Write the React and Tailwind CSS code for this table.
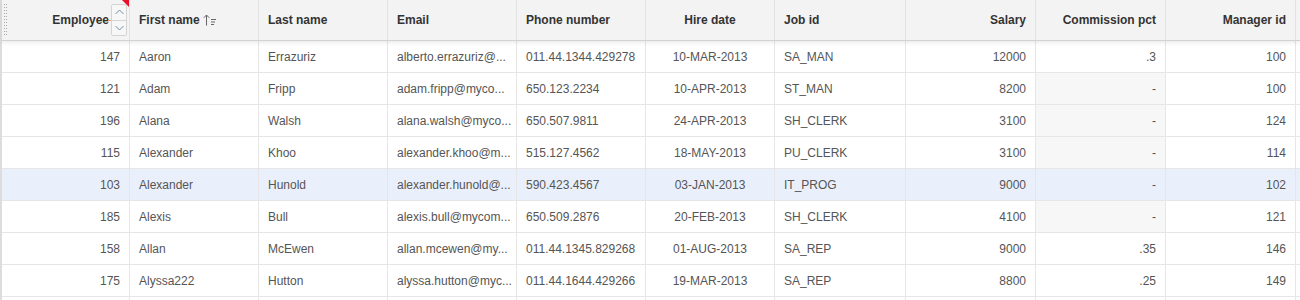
import React from 'react'

const cols = [
  { key: 'id', label: 'Employee', align: 'right' },
  { key: 'first', label: 'First name', align: 'left' },
  { key: 'last', label: 'Last name', align: 'left' },
  { key: 'email', label: 'Email', align: 'left' },
  { key: 'phone', label: 'Phone number', align: 'left' },
  { key: 'hire', label: 'Hire date', align: 'center' },
  { key: 'job', label: 'Job id', align: 'left' },
  { key: 'salary', label: 'Salary', align: 'right' },
  { key: 'comm', label: 'Commission pct', align: 'right' },
  { key: 'mgr', label: 'Manager id', align: 'right' },
]

// emails already cut the way the grid shows them
const rows = [
  ['147', 'Aaron', 'Errazuriz', 'alberto.errazuriz@...', '011.44.1344.429278', '10-MAR-2013', 'SA_MAN', '12000', '.3', '100'],
  ['121', 'Adam', 'Fripp', 'adam.fripp@myco...', '650.123.2234', '10-APR-2013', 'ST_MAN', '8200', '-', '100'],
  ['196', 'Alana', 'Walsh', 'alana.walsh@myco...', '650.507.9811', '24-APR-2013', 'SH_CLERK', '3100', '-', '124'],
  ['115', 'Alexander', 'Khoo', 'alexander.khoo@m...', '515.127.4562', '18-MAY-2013', 'PU_CLERK', '3100', '-', '114'],
  ['103', 'Alexander', 'Hunold', 'alexander.hunold@...', '590.423.4567', '03-JAN-2013', 'IT_PROG', '9000', '-', '102'],
  ['185', 'Alexis', 'Bull', 'alexis.bull@mycom...', '650.509.2876', '20-FEB-2013', 'SH_CLERK', '4100', '-', '121'],
  ['158', 'Allan', 'McEwen', 'allan.mcewen@my...', '011.44.1345.829268', '01-AUG-2013', 'SA_REP', '9000', '.35', '146'],
  ['175', 'Alyssa222', 'Hutton', 'alyssa.hutton@myc...', '011.44.1644.429266', '19-MAR-2013', 'SA_REP', '8800', '.25', '149'],
]

const alignCls = { left: 'justify-start text-left', right: 'justify-end text-right', center: 'justify-center text-center' }

function SortSpinner() {
  return (
    <div className="absolute right-[2px] top-[4px] flex h-[32px] w-[16px] flex-col rounded-[2px] border border-[#d4d4d4] bg-[#f7f7f7]">
      <div className="flex flex-1 items-center justify-center border-b border-[#d4d4d4]">
        <svg width="9" height="6" viewBox="0 0 9 6" fill="none" stroke="#7a8aa0" strokeWidth="1">
          <path d="M0.5 5 L4.5 1 L8.5 5" />
        </svg>
      </div>
      <div className="flex flex-1 items-center justify-center">
        <svg width="9" height="6" viewBox="0 0 9 6" fill="none" stroke="#7a8aa0" strokeWidth="1">
          <path d="M0.5 1 L4.5 5 L8.5 1" />
        </svg>
      </div>
    </div>
  )
}

function SortAscIcon() {
  return (
    <svg width="14" height="12" viewBox="0 0 14 12" fill="none" stroke="#666" strokeWidth="1" className="ml-[3px]">
      <path d="M3.5 11.5 V1 M0.8 3.8 L3.5 1 L6.2 3.8" />
      <path d="M8 5.5 H13 M8 8 H12 M8 10.5 H11" />
    </svg>
  )
}

export default function App() {
  return (
    <div className="h-[300px] w-[1300px] overflow-hidden bg-white text-[12px]" style={{ fontFamily: '"Segoe UI", "Liberation Sans", Arial, sans-serif' }}>
      <div className="relative border-l-2 border-[#dcdcdc]">
        {/* header */}
        <div className="relative z-10 grid h-[41px] grid-cols-[128px_129px_129px_129px_129px_129px_131px_130px_130px_130px] border-b border-[#d2d2d2] bg-[#f3f3f3] shadow-[0_2px_4px_rgba(0,0,0,0.08)]">
          {cols.map((c, i) => (
            <div key={c.key} className={`relative flex items-center border-r border-[#e2e2e2] px-[9px] font-bold text-[#333] ${alignCls[c.align]} ${i === 0 ? 'pr-[20px]' : ''}`}>
              {i === 0 && (
                <>
                  <div className="absolute left-[2px] top-[4px] flex flex-col gap-[2px]">
                    {Array.from({ length: 11 }).map((_, k) => (
                      <div key={k} className="flex gap-[1px]">
                        <span className="h-[1px] w-[1px] bg-[#a8a8a8]" />
                        <span className="h-[1px] w-[1px] bg-[#a8a8a8]" />
                      </div>
                    ))}
                  </div>
                  <span className="absolute right-0 top-0 h-0 w-0 border-l-[7px] border-t-[7px] border-l-transparent border-t-[#e8102a]" />
                  <span className="absolute right-[18px] top-[20px] h-[1px] w-[3px] bg-[#e8a060]" />
                  <SortSpinner />
                </>
              )}
              <span className="whitespace-nowrap">{c.label}</span>
              {i === 1 && <SortAscIcon />}
            </div>
          ))}
        </div>
        {/* body */}
        {rows.map((r, ri) => {
          const selected = r[0] === '103'
          return (
            <div key={ri} className={`grid h-[32px] grid-cols-[128px_129px_129px_129px_129px_129px_131px_130px_130px_130px] border-b border-[#e6e6e6] ${selected ? 'bg-[#eaf0fb]' : ''}`}>
              {cols.map((c, ci) => {
                const muted = c.key === 'comm' && r[ci] === '-' && !selected
                return (
                  <div key={c.key} className={`flex min-w-0 items-center border-r border-[#e6e6e6] px-[9px] text-[#555] ${alignCls[c.align]} ${muted ? 'bg-[#f7f7f7]' : ''}`}>
                    <span className="whitespace-nowrap">{r[ci]}</span>
                  </div>
                )
              })}
            </div>
          )
        })}
        {/* partially visible next row */}
        <div className="grid h-[32px] grid-cols-[128px_129px_129px_129px_129px_129px_131px_130px_130px_130px]">
          {cols.map(c => (
            <div key={c.key} className="border-r border-[#e6e6e6]" />
          ))}
        </div>
      </div>
    </div>
  )
}
